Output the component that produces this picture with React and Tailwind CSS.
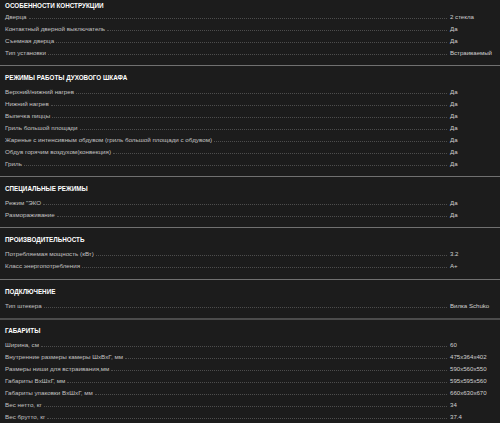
const sections = [
  {
    title: 'ОСОБЕННОСТИ КОНСТРУКЦИИ',
    rows: [
      ['Дверца', '2 стекла'],
      ['Контактный дверной выключатель', 'Да'],
      ['Съемная дверца', 'Да'],
      ['Тип установки', 'Встраиваемый'],
    ],
  },
  {
    title: 'РЕЖИМЫ РАБОТЫ ДУХОВОГО ШКАФА',
    rows: [
      ['Верхний/нижний нагрев', 'Да'],
      ['Нижний нагрев', 'Да'],
      ['Выпечка пиццы', 'Да'],
      ['Гриль большой площади', 'Да'],
      ['Жаренье с интенсивным обдувом (гриль большой площади с обдувом)', 'Да'],
      ['Обдув горячим воздухом(конвекция)', 'Да'],
      ['Гриль', 'Да'],
    ],
  },
  {
    title: 'СПЕЦИАЛЬНЫЕ РЕЖИМЫ',
    rows: [
      ['Режим "ЭКО', 'Да'],
      ['Размораживание', 'Да'],
    ],
  },
  {
    title: 'ПРОИЗВОДИТЕЛЬНОСТЬ',
    rows: [
      ['Потребляемая мощность (кВт)', '3.2'],
      ['Класс энергопотребления', 'A+'],
    ],
  },
  {
    title: 'ПОДКЛЮЧЕНИЕ',
    rows: [['Тип штекера', 'Вилка Schuko']],
  },
  {
    title: 'ГАБАРИТЫ',
    rows: [
      ['Ширина, см', '60'],
      ['Внутренние размеры камеры ШxВxГ, мм', '475x364x402'],
      ['Размеры ниши для встраивания,мм', '590x560x550'],
      ['Габариты ВxШxГ, мм', '595x595x560'],
      ['Габариты упаковки ВxШxГ, мм', '660x630x670'],
      ['Вес нетто, кг', '34'],
      ['Вес брутто, кг', '37.4'],
    ],
  },
];

const sectionClass = [
  'pb-[6px]',
  'border-t border-[#707070] pt-[6px] pb-[6px]',
  'border-t border-[#707070] pt-[6px] pb-[6px]',
  'border-t border-[#707070] pt-[6px] pb-[7px]',
  'border-t border-[#707070] pt-[6px] pb-[6px]',
  'border-t-2 border-[#4c4c4c] pt-[5px] pb-[6px]',
];

function Row({ label, value }) {
  return (
    <div className="flex items-center h-[12px] pl-[5px]">
      <span className="text-[6.25px] text-[#c2c2c2] whitespace-nowrap leading-none">{label}</span>
      <span className="flex-1 ml-[2px] mr-[3px] mt-[3px] border-b border-dotted border-[#4d4d4d]" />
      <span className="w-[50px] text-[6.1px] text-[#d0d0d0] whitespace-nowrap leading-none">{value}</span>
    </div>
  );
}

export default function App() {
  return (
    <div
      className="w-[500px] h-[423px] overflow-hidden bg-[#1c1c1c]"
      style={{ fontFamily: '"Liberation Sans", Arial, sans-serif' }}
    >
      {sections.map((s, i) => (
        <div key={s.title} className={sectionClass[i]}>
          <div
            className={`h-[11px] flex items-center pl-[5px] text-[6.3px] font-bold text-white ${
              i === 0 ? '' : 'mb-[3px]'
            }`}
          >
            {s.title}
          </div>
          {s.rows.map(([l, v]) => (
            <Row key={l} label={l} value={v} />
          ))}
        </div>
      ))}
    </div>
  );
}
